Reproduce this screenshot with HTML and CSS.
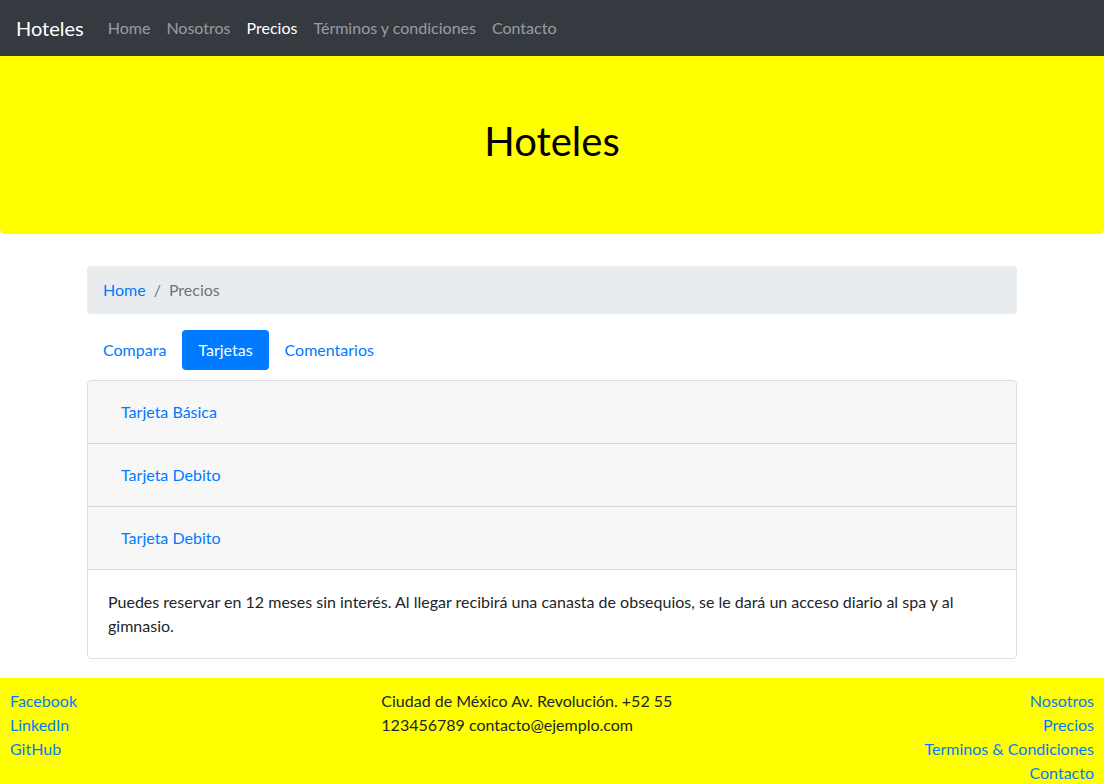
FILE: index.html
```html
<!DOCTYPE html>
<html lang="es">
<head>
<meta charset="utf-8">
<title>Hoteles - Precios</title>
<link rel="stylesheet" href="styles.css">
</head>
<body>
<div class="page">
  <nav class="navbar">
    <a class="brand" href="#">Hoteles</a>
    <ul class="nav-links">
      <li><a href="#">Home</a></li>
      <li><a href="#">Nosotros</a></li>
      <li><a class="active" href="#">Precios</a></li>
      <li><a href="#">Términos y condiciones</a></li>
      <li><a href="#">Contacto</a></li>
    </ul>
  </nav>

  <header class="jumbotron">
    <h1>Hoteles</h1>
  </header>

  <main class="container">
    <ol class="breadcrumb">
      <li><a href="#">Home</a></li>
      <li class="sep">/</li>
      <li class="current">Precios</li>
    </ol>

    <ul class="pills">
      <li><a href="#">Compara</a></li>
      <li><a class="active" href="#">Tarjetas</a></li>
      <li><a href="#">Comentarios</a></li>
    </ul>

    <div class="accordion">
      <div class="acc-header"><button class="btn-link">Tarjeta Básica</button></div>
      <div class="acc-header"><button class="btn-link">Tarjeta Debito</button></div>
      <div class="acc-header"><button class="btn-link">Tarjeta Debito</button></div>
      <div class="acc-body">Puedes reservar en 12 meses sin interés. Al llegar recibirá una canasta de obsequios, se le dará un acceso diario al spa y al gimnasio.</div>
    </div>
  </main>

  <footer class="footer">
    <ul class="foot-col foot-left">
      <li><a href="#">Facebook</a></li>
      <li><a href="#">LinkedIn</a></li>
      <li><a href="#">GitHub</a></li>
    </ul>
    <p class="foot-col foot-center">Ciudad de México Av. Revolución. +52 55 123456789 contacto@ejemplo.com</p>
    <ul class="foot-col foot-right">
      <li><a href="#">Nosotros</a></li>
      <li><a href="#">Precios</a></li>
      <li><a href="#">Terminos &amp; Condiciones</a></li>
      <li><a href="#">Contacto</a></li>
    </ul>
  </footer>
</div>
</body>
</html>
```

FILE: styles.css
```css
* { box-sizing: border-box; }
html, body { margin: 0; padding: 0; background: #fff; }
body {
  font-family: "Lato", "Noto Sans", sans-serif;
  font-size: 16px;
  line-height: 1.5;
  color: #212529;
}
.page { width: 1104px; }
a { color: #007bff; text-decoration: none; }
ul, ol { list-style: none; margin: 0; padding: 0; }

.navbar {
  display: flex;
  align-items: center;
  height: 56px;
  padding: 8px 16px;
  background: #343a40;
}
.brand {
  color: #fff;
  font-size: 20px;
  line-height: 30px;
  padding: 5px 0;
  margin-right: 16px;
}
.nav-links { display: flex; }
.nav-links a {
  display: block;
  padding: 8px;
  color: rgba(255,255,255,.5);
}
.nav-links a.active { color: #fff; }

.jumbotron {
  background: #ffff00;
  padding: 60px 32px 68px;
  margin-bottom: 32px;
  border-radius: 0 0 5px 5px;
  text-align: center;
}
.jumbotron h1 {
  margin: 0;
  font-size: 40px;
  font-weight: 400;
  line-height: 50px;
  color: #000;
}

.container {
  width: 960px;
  margin: 0 auto;
  padding: 0 15px;
}
.breadcrumb {
  display: flex;
  background: #e9ecef;
  border-radius: 4px;
  padding: 12px 16px;
  margin: 0 0 16px;
}
.breadcrumb .sep { color: #6c757d; padding: 0 8px; }
.breadcrumb .current { color: #6c757d; }

.pills { display: flex; margin-bottom: 10px; }
.pills a {
  display: block;
  padding: 8px 16px;
  border-radius: 4px;
}
.pills a.active { background: #007bff; color: #fff; }

.accordion {
  border: 1px solid rgba(0,0,0,.125);
  border-radius: 4px;
  overflow: hidden;
}
.acc-header {
  background: rgba(0,0,0,.03);
  padding: 12px 20px;
  border-bottom: 1px solid rgba(0,0,0,.125);
}
.btn-link {
  font: inherit;
  color: #007bff;
  background: transparent;
  border: 1px solid transparent;
  padding: 6px 12px;
  line-height: 24px;
  cursor: pointer;
}
.acc-body { padding: 20px; }

.footer {
  margin-top: 19px;
  background: #ffff00;
  padding: 11px 10px;
  display: grid;
  grid-template-columns: 1fr 1fr 1fr;
}
.foot-col { margin: 0; }
.foot-center { padding: 0 10px; }
.foot-right { text-align: right; }
```
